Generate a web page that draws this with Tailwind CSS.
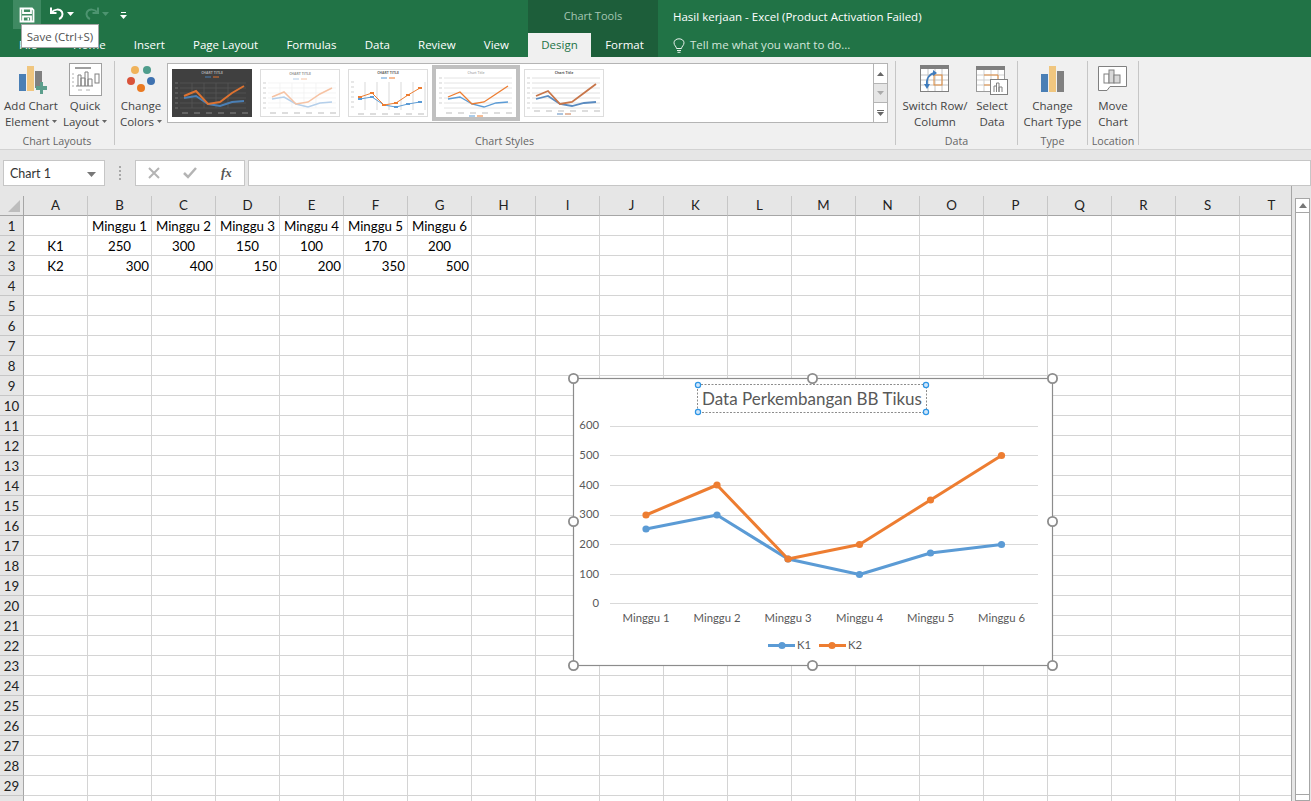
<!DOCTYPE html>
<html lang="en">

<head>
  <meta charset="UTF-8" />
  <title>Hasil kerjaan - Excel</title>
  <script src="https://cdn.jsdelivr.net/npm/@tailwindcss/browser@4"></script>
</head>

<body class="relative w-[1311px] h-[801px] overflow-hidden bg-[#e6e6e6] font-['Open_Sans',sans-serif]">
  <!-- Title bar and tabs -->
  <header class="flex h-[57px] bg-[#217346] text-white text-[11.5px]">
    <div class="w-[528px] flex flex-col">
      <div class="h-[33px] flex items-start pl-[13px]">
        <div class="w-7 h-[29px] bg-[#3f8a62] flex items-center justify-center">
          <svg width="16" height="16" viewBox="0 0 16 16" fill="none" stroke="#fff" stroke-width="1.800"><path d="M1.500 1.500H13L14.500 3V14.500H1.500Z" /><path d="M4 2V6H12V2" /><path d="M4 14V9.500H12V14" /><rect x="8.500" y="11" width="1.600" height="2.500" fill="#fff" stroke="none" /></svg>
        </div>
        <svg class="ml-2 mt-[5px]" width="16" height="16" viewBox="0 0 16 16" fill="none" stroke="#fff" stroke-width="2"><path d="M2 2.500V8H7.500" /><path d="M2.500 7.500C5 4 11 3.500 13 7C14.500 10 12.500 13 10 14" /></svg>
        <svg class="ml-[2px] mt-3" width="7" height="4" viewBox="0 0 7 4" fill="#fff"><path d="M0 0H7L3.500 4Z" /></svg>
        <svg class="ml-[10px] mt-[5px]" width="16" height="16" viewBox="0 0 16 16" fill="none" stroke="#4d9470" stroke-width="2"><path d="M14 2.500V8H8.500" /><path d="M13.500 7.500C11 4 5 3.500 3 7C1.500 10 3.500 13 6 14" /></svg>
        <svg class="ml-[2px] mt-3" width="7" height="4" viewBox="0 0 7 4" fill="#4d9470"><path d="M0 0H7L3.500 4Z" /></svg>
        <svg class="ml-[11px] mt-3" width="7" height="7" viewBox="0 0 7 7" fill="#fff"><rect x="1" y="0" width="5" height="1" /><path d="M0 3H7L3.500 7Z" /></svg>
      </div>
      <nav class="h-6 flex items-center">
        <span class="w-[59px] pl-[19px]">File</span>
        <span class="px-[14.1px]">Home</span>
        <span class="px-[14.1px]">Insert</span>
        <span class="px-[14.1px]">Page Layout</span>
        <span class="px-[14.1px]">Formulas</span>
        <span class="px-[14.1px]">Data</span>
        <span class="px-[14.1px]">Review</span>
        <span class="px-[14.1px]">View</span>
      </nav>
    </div>
    <div class="w-[130px] bg-[#1d5e3a] flex flex-col">
      <div class="h-[33px] flex items-center justify-center text-[#a5c6b3] text-[11px]">Chart Tools</div>
      <div class="h-6 flex">
        <span class="w-[63px] bg-[#f0f0f0] text-[#217346] flex items-center justify-center">Design</span>
        <span class="w-[67px] flex items-center justify-center">Format</span>
      </div>
    </div>
    <div class="flex-1 flex flex-col pl-[15px]">
      <div class="h-[33px] flex items-center">Hasil kerjaan - Excel (Product Activation Failed)</div>
      <div class="h-6 flex items-center text-[#d3e6da]">
        <svg width="12" height="15" viewBox="0 0 12 15" fill="none" stroke="#e8f2ec" stroke-width="1"><path d="M3.500 10.500C3.500 8.500 1 7.500 1 4.800C1 2.500 3.200 .8 6 .8C8.800 .8 11 2.500 11 4.800C11 7.500 8.500 8.500 8.500 10.500Z" /><path d="M4 12.500H8M4.500 14.300H7.500" /></svg>
        <span class="ml-[5px]">Tell me what you want to do...</span>
      </div>
    </div>
  </header>

  <!-- Tooltip on the save button -->
  <div class="absolute left-[21px] top-6 w-[78px] h-6 bg-white border border-[#a6a6a6] flex items-center justify-center text-[11.5px] pt-[2px] text-[#505050] whitespace-nowrap">Save (Ctrl+S)</div>

  <!-- Ribbon -->
  <section class="flex h-[93px] bg-[#f0f0f0] border-b border-[#d2d2d2] text-[11.500px] leading-4 text-[#444]">
    <!-- Chart Layouts -->
    <div class="w-[115px] mt-[4px] h-[84px] border-r border-[#c6c6c6] flex flex-col">
      <div class="flex-1 flex pt-[4px]">
        <div class="w-[62px] flex flex-col items-center">
          <svg width="32" height="33" viewBox="0 0 32 33"><rect x="4" y="9" width="7" height="17" fill="#4a7fb5" /><rect x="12" y="1" width="7" height="25" fill="#f0c67f" /><rect x="20" y="6" width="7" height="17" fill="#808080" /><path d="M21 21H25V17H28V21H32V25H28V29H25V25H21Z" fill="#5c9e8c" /></svg>
          <span class="text-center">Add Chart<br />Element <svg class="inline mb-[2px]" width="5" height="3" viewBox="0 0 5 3" fill="#666"><path d="M0 0H5L2.500 3Z" /></svg></span>
        </div>
        <div class="w-[46px] flex flex-col items-center">
          <svg class="-mt-[2px]" width="33" height="33" viewBox="0 0 33 33" fill="none"><rect x=".5" y=".5" width="32" height="32" fill="#fff" stroke="#a0a0a0" /><rect x="6" y="4" width="16" height="2" fill="#a0a0a0" /><path d="M9 23V12H12V23M12 23V15H16V23M16 23V9H19V23M19 23V16H23V23M7 23H24" stroke="#808080" /><rect x="26" y="11" width="4" height="9" stroke="#808080" /><path d="M3 11H5M3 15H5M3 19H5M3 23H5M9 27H13M17 27H21" stroke="#b0b0b0" /></svg>
          <span class="mt-[2px] text-center">Quick<br />Layout <svg class="inline mb-[2px]" width="5" height="3" viewBox="0 0 5 3" fill="#666"><path d="M0 0H5L2.500 3Z" /></svg></span>
        </div>
      </div>
      <div class="h-2 leading-2 text-center text-[10.700px] text-[#666]">Chart Layouts</div>
    </div>

    <!-- Chart Styles -->
    <div class="w-[781px] h-[84px] mt-[4px] border-r border-[#c6c6c6] flex flex-col">
      <div class="flex-1 flex">
        <div class="w-[52px] pt-[4px] flex flex-col items-center">
          <svg width="30" height="33" viewBox="0 0 30 33"><circle cx="9" cy="5" r="4" fill="#f0b35b" /><circle cx="21" cy="5" r="4" fill="#4f9d8c" /><circle cx="5" cy="16" r="4" fill="#d9533a" /><circle cx="25" cy="16" r="4" fill="#3f72b0" /><circle cx="15" cy="23" r="4" fill="#ea7a22" /></svg>
          <span class="text-center">Change<br />Colors <svg class="inline mb-[2px]" width="5" height="3" viewBox="0 0 5 3" fill="#666"><path d="M0 0H5L2.500 3Z" /></svg></span>
        </div>
        <div class="w-[721px] h-[60px] mt-[2px] bg-white border border-[#b4b4b4] flex">
          <div class="flex-1 flex items-center pl-1">
            <!-- dark style -->
            <svg width="80" height="48" viewBox="0 0 80 48"><rect width="80" height="48" fill="#404040" /><text x="40" y="5" text-anchor="middle" font-size="3.500" font-weight="700" fill="#aaa" font-family="Open Sans">CHART TITLE</text><path d="M33 8H39" stroke="#4a7fb5" /><path d="M41 8H47" stroke="#dd7230" /><path d="M8 14H74M8 19H74M8 24H74M8 29H74M8 34H74M8 39H74M20 14V39M32 14V39M44 14V39M56 14V39" stroke="#5c5c5c" stroke-width=".6" /><polyline points="12,29 24,27 36,35 48,37 60,33 72,32" fill="none" stroke="#4a7fb5" stroke-width="2" /><polyline points="12,27 24,22 36,35 48,33 60,24 72,17" fill="none" stroke="#dd7230" stroke-width="2" /><path d="M10 44H16M22 44H28M34 44H40M46 44H52M58 44H64M70 44H76" stroke="#888" /><path d="M3 14H6M3 19H6M3 24H6M3 29H6M3 34H6M3 39H6" stroke="#888" stroke-width=".7" /></svg>
            <!-- pale lines style -->
            <svg class="ml-2" width="80" height="48" viewBox="0 0 80 48"><rect x=".5" y=".5" width="79" height="47" fill="#fff" stroke="#ddd" /><text x="40" y="6" text-anchor="middle" font-size="3.500" font-weight="700" fill="#999" font-family="Open Sans">CHART TITLE</text><path d="M33 10H39" stroke="#b5cfea" /><path d="M41 10H47" stroke="#f6c3a4" /><path d="M8 14H76M8 19H76M8 24H76M8 29H76M8 34H76M8 39H76M20 14V39M32 14V39M44 14V39M56 14V39" stroke="#efefef" stroke-width=".7" /><polyline points="12,30 24,28 36,35 48,38 60,34 72,33" fill="none" stroke="#b5cfea" stroke-width="1.500" /><polyline points="12,28 24,23 36,35 48,33 60,25 72,19" fill="none" stroke="#f6c3a4" stroke-width="1.500" /><path d="M10 44H16M22 44H28M34 44H40M46 44H52M58 44H64M70 44H76" stroke="#bbb" /><path d="M3 14H6M3 19H6M3 24H6M3 29H6M3 34H6M3 39H6" stroke="#bbb" stroke-width=".7" /></svg>
            <!-- bands and markers style -->
            <svg class="ml-2" width="80" height="48" viewBox="0 0 80 48"><rect x=".5" y=".5" width="79" height="47" fill="#fff" stroke="#ddd" /><text x="40" y="5" text-anchor="middle" font-size="3.500" font-weight="700" fill="#666" font-family="Open Sans">CHART TITLE</text><path d="M33 9H39" stroke="#5b9bd5" /><path d="M41 9H47" stroke="#ed7d31" /><path d="M17 13V41M29 13V41M41 13V41M53 13V41M65 13V41M77 13V41" stroke="#e6e6e6" stroke-width="1.500" /><polyline points="12,30 24,28 36,36 48,38 60,35 72,33" fill="none" stroke="#5b9bd5" /><polyline points="12,28 24,24 36,36 48,34 60,26 72,19" fill="none" stroke="#ed7d31" /><path d="M10 30H14M22 28H26M34 36H38M46 38H50M58 35H62M70 33H74" stroke="#5b9bd5" stroke-width="2" /><path d="M10 28H14M22 24H26M34 36H38M46 34H50M58 26H62M70 19H74" stroke="#ed7d31" stroke-width="2" /><path d="M10 45H16M22 45H28M34 45H40M46 45H52M58 45H64M70 45H76" stroke="#bbb" /><path d="M3 13H6M3 18H6M3 23H6M3 28H6M3 33H6M3 38H6" stroke="#bbb" stroke-width=".7" /></svg>
            <!-- selected style -->
            <svg class="ml-1" width="88" height="56" viewBox="0 0 88 56"><rect width="88" height="56" fill="#c0c0c0" /><rect x="4" y="4" width="80" height="48" fill="#fff" /><text x="44" y="9" text-anchor="middle" font-size="3.500" fill="#888" font-family="Open Sans">Chart Title</text><path d="M12 13H80M12 18H80M12 23H80M12 28H80M12 33H80M12 38H80M12 43H80" stroke="#e4e4e4" /><polyline points="16,34 28,32 40,39 52,42 64,38 76,37" fill="none" stroke="#5b9bd5" stroke-width="1.300" /><polyline points="16,32 28,27 40,39 52,37 64,29 76,21" fill="none" stroke="#ed7d31" stroke-width="1.300" /><path d="M14 48H20M26 48H32M38 48H44M50 48H56M62 48H68M74 48H80" stroke="#bbb" /><path d="M37 51H43" stroke="#5b9bd5" /><path d="M45 51H51" stroke="#ed7d31" /><path d="M7 13H10M7 18H10M7 23H10M7 28H10M7 33H10M7 38H10" stroke="#bbb" stroke-width=".7" /></svg>
            <!-- thick lines style -->
            <svg class="ml-1" width="80" height="48" viewBox="0 0 80 48"><rect x=".5" y=".5" width="79" height="47" fill="#fff" stroke="#ddd" /><text x="40" y="5" text-anchor="middle" font-size="3.500" font-weight="700" fill="#555" font-family="Open Sans">Chart Title</text><path d="M8 9H76M8 14H76M8 19H76M8 24H76M8 29H76M8 34H76M8 39H76" stroke="#e0e0e0" /><polyline points="12,30 24,27 36,35 48,37 60,34 72,33" fill="none" stroke="#5a8bc0" stroke-width="1.800" /><polyline points="12,27 24,22 36,35 48,33 60,24 72,15" fill="none" stroke="#c8764a" stroke-width="1.800" /><path d="M10 42H16M22 42H28M34 42H40M46 42H52M58 42H64M70 42H76" stroke="#bbb" /><path d="M33 45H39" stroke="#5a8bc0" /><path d="M41 45H47" stroke="#c8764a" /><path d="M3 9H6M3 14H6M3 19H6M3 24H6M3 29H6M3 34H6M3 39H6" stroke="#bbb" stroke-width=".7" /></svg>
          </div>
          <div class="w-[14px] flex flex-col border-l border-[#b4b4b4]">
            <div class="h-[20px] flex items-center justify-center border-b border-[#b4b4b4]"><svg width="7" height="4" viewBox="0 0 7 4" fill="#666"><path d="M0 4H7L3.500 0Z" /></svg></div>
            <div class="h-[19px] bg-[#e6e6e6] flex items-center justify-center border-b border-[#b4b4b4]"><svg width="7" height="4" viewBox="0 0 7 4" fill="#aaa"><path d="M0 0H7L3.500 4Z" /></svg></div>
            <div class="flex-1 flex items-center justify-center"><svg width="7" height="6" viewBox="0 0 7 6" fill="#666"><rect width="7" height="1" /><path d="M0 2H7L3.500 6Z" /></svg></div>
          </div>
        </div>
      </div>
      <div class="h-2 leading-2 text-center text-[10.700px] text-[#666] pr-[1px]">Chart Styles</div>
    </div>

    <!-- Data -->
    <div class="w-[122px] h-[84px] mt-[4px] border-r border-[#c6c6c6] flex flex-col">
      <div class="flex-1 flex pl-[2px] pt-[4px]">
        <div class="w-[74px] flex flex-col items-center">
          <svg width="30" height="33" viewBox="0 0 30 33" fill="none"><rect x=".5" y=".5" width="28" height="26" fill="#fff" stroke="#808080" /><rect x="0" y="0" width="29" height="4" fill="#7f7f7f" /><path d="M1 10H28M1 15H28M1 20H28M8 4V26M15 4V26M22 4V26" stroke="#c4c4c4" /><rect x="14" y="10" width="8" height="10" stroke="#e08b3c" /><path d="M7 21C6 14 9 9 15 8" stroke="#3f7cbd" stroke-width="1.800" /><path d="M13 5L17 8L13 11ZM4 19L7 24L10 19Z" fill="#3f7cbd" /></svg>
          <span class="text-center">Switch Row/<br />Column</span>
        </div>
        <div class="w-[40px] flex flex-col items-center">
          <svg width="32" height="33" viewBox="0 0 32 33" fill="none"><rect x=".5" y="1.500" width="28" height="25" fill="#fff" stroke="#9a9a9a" /><rect x="0" y="1" width="29" height="4" fill="#7f7f7f" /><path d="M1 10H28M1 15H28M1 20H28M8 5V26M15 5V26M22 5V26" stroke="#cfcfcf" /><path d="M8 10H22V20H8" stroke="#e08b3c" /><rect x="14.500" y="14.500" width="17" height="15" fill="#fff" stroke="#808080" /><path d="M18 27V21H20.500V27M20.500 27V18H23V27M23 27V22H26V27" stroke="#808080" /></svg>
          <span class="text-center">Select<br />Data</span>
        </div>
      </div>
      <div class="h-2 leading-2 text-center text-[10.700px] text-[#666]">Data</div>
    </div>

    <!-- Type -->
    <div class="w-[70px] h-[84px] mt-[4px] border-r border-[#c6c6c6] flex flex-col">
      <div class="flex-1 flex flex-col items-center pt-[4px]">
        <svg width="24" height="33" viewBox="0 0 24 33"><rect x="0" y="9" width="7" height="18" fill="#4a7fb5" /><rect x="8" y="1" width="7" height="26" fill="#f0c67f" /><rect x="16" y="6" width="7" height="21" fill="#808080" /></svg>
        <span class="text-center whitespace-nowrap">Change<br />Chart Type</span>
      </div>
      <div class="h-2 leading-2 text-center text-[10.700px] text-[#666]">Type</div>
    </div>

    <!-- Location -->
    <div class="w-[51px] h-[84px] mt-[4px] border-r border-[#c6c6c6] flex flex-col">
      <div class="flex-1 flex flex-col items-center pt-[4px]">
        <svg width="30" height="33" viewBox="0 0 30 33" fill="none"><path d="M.5 1.500H28.500V21.500H12L9 25.500H.5Z" fill="#fff" stroke="#808080" /><rect x="6" y="9" width="5" height="9" stroke="#808080" /><rect x="11" y="5" width="5" height="13" fill="#d8d8d8" stroke="#808080" /><rect x="16" y="10" width="6" height="8" fill="#d8d8d8" stroke="#808080" /></svg>
        <span class="text-center">Move<br />Chart</span>
      </div>
      <div class="h-2 leading-2 text-center text-[10.700px] text-[#666] whitespace-nowrap">Location</div>
    </div>
  </section>

  <!-- Formula bar -->
  <section class="h-9 bg-[#e6e6e6] flex items-end pl-[3px]">
    <div class="w-[102px] h-[26px] bg-white border border-[#c6c6c6] flex items-center justify-between pl-[6px] pr-2 pt-[2px] text-[12.500px] text-[#333] font-['Lato',sans-serif]">
      Chart 1
      <svg width="9" height="5" viewBox="0 0 9 5" fill="#777"><path d="M0 0H9L4.500 5Z" /></svg>
    </div>
    <div class="w-[30px] h-[26px] flex flex-col items-center justify-center gap-[2px]">
      <i class="w-[2px] h-[2px] bg-[#a8a8a8]"></i><i class="w-[2px] h-[2px] bg-[#a8a8a8]"></i><i class="w-[2px] h-[2px] bg-[#a8a8a8]"></i><i class="w-[2px] h-[2px] bg-[#a8a8a8]"></i>
    </div>
    <div class="w-[110px] h-[26px] bg-white border border-[#c6c6c6] flex items-center pl-[12px]">
      <svg width="12" height="12" viewBox="0 0 12 12" stroke="#b4b4b4" stroke-width="2"><path d="M1 1L11 11M11 1L1 11" /></svg>
      <svg class="ml-[23px]" width="14" height="12" viewBox="0 0 14 12" fill="none" stroke="#b4b4b4" stroke-width="2.500"><path d="M1 6L5 10L13 1" /></svg>
      <span class="ml-[24px] font-['Liberation_Serif',serif] italic font-bold text-[13px] text-[#555]">fx</span>
    </div>
    <div class="w-[1063px] ml-[3px] h-[26px] bg-white border border-[#c6c6c6]"></div>
  </section>

  <!-- Worksheet and vertical scrollbar -->
  <section class="flex h-[615px]">
    <div class="relative w-[1292px] h-full overflow-hidden bg-white border-r border-[#a6a6a6]">
      <div class="h-[10px] bg-[#e6e6e6]"></div>
      <div id="sheet" class="grid grid-cols-[24px_repeat(20,64px)] auto-rows-[20px] w-max font-['Lato',sans-serif] text-[13.300px] text-black"></div>
      <svg class="absolute left-[8px] top-[14px]" width="12" height="12" viewBox="0 0 12 12" fill="#bdbdbd"><path d="M12 0V12H0Z" /></svg>
    </div>
    <div class="w-[19px] pl-[3px] pt-3 pr-[1px]">
      <div class="h-full bg-white border border-[#a6a6a6] flex flex-col justify-between">
        <div class="h-[14px] flex items-center justify-center border-b border-[#a6a6a6]"><svg width="8" height="5" viewBox="0 0 8 5" fill="#777"><path d="M0 5H8L4 0Z" /></svg></div>
        <div class="h-[6px] border-t border-[#a6a6a6]"></div>
      </div>
    </div>
  </section>

  <!-- Chart floating over the sheet -->
  <svg class="absolute left-[560px] top-[370px] font-['Lato',sans-serif]" width="510" height="310" viewBox="560 370 510 310">
    <rect x="573.500" y="378.500" width="479" height="287" fill="#fff" stroke="#8c8c8c" stroke-width="1.200" />
    <g stroke="#d9d9d9">
      <path d="M610 426.500H1038M610 455.500H1038M610 485.500H1038M610 515.500H1038M610 544.500H1038M610 574.500H1038M610 603.500H1038" />
    </g>
    <g fill="#595959" font-size="11.300" text-anchor="end">
      <text x="599" y="429">600</text><text x="599" y="459">500</text><text x="599" y="489">400</text><text x="599" y="518">300</text><text x="599" y="548">200</text><text x="599" y="578">100</text><text x="599" y="607">0</text>
    </g>
    <g fill="#595959" font-size="11.300" text-anchor="middle">
      <text x="646" y="622">Minggu 1</text><text x="717" y="622">Minggu 2</text><text x="788" y="622">Minggu 3</text><text x="859.500" y="622">Minggu 4</text><text x="930.500" y="622">Minggu 5</text><text x="1001.500" y="622">Minggu 6</text>
    </g>
    <polyline points="646,529 717,515 788,559 859.500,574.500 930.500,553 1001.500,544.500" fill="none" stroke="#5b9bd5" stroke-width="3" stroke-linejoin="round" />
    <g fill="#5b9bd5"><circle cx="646" cy="529" r="3.600" /><circle cx="717" cy="515" r="3.600" /><circle cx="788" cy="559" r="3.600" /><circle cx="859.500" cy="574.500" r="3.600" /><circle cx="930.500" cy="553" r="3.600" /><circle cx="1001.500" cy="544.500" r="3.600" /></g>
    <polyline points="646,515 717,485 788,559 859.500,544.500 930.500,500 1001.500,455.500" fill="none" stroke="#ed7d31" stroke-width="3" stroke-linejoin="round" />
    <g fill="#ed7d31"><circle cx="646" cy="515" r="3.600" /><circle cx="717" cy="485" r="3.600" /><circle cx="788" cy="559" r="3.600" /><circle cx="859.500" cy="544.500" r="3.600" /><circle cx="930.500" cy="500" r="3.600" /><circle cx="1001.500" cy="455.500" r="3.600" /></g>
    <!-- legend -->
    <path d="M768 645.500H795" stroke="#5b9bd5" stroke-width="3" /><circle cx="782" cy="645.500" r="3.600" fill="#5b9bd5" />
    <text x="797" y="649" fill="#595959" font-size="11.300">K1</text>
    <path d="M819 645.500H846" stroke="#ed7d31" stroke-width="3" /><circle cx="832" cy="645.500" r="3.600" fill="#ed7d31" />
    <text x="848" y="649" fill="#595959" font-size="11.300">K2</text>
    <!-- title with selection box -->
    <rect x="697.500" y="384.500" width="229" height="28" fill="none" stroke="#8c8c8c" stroke-dasharray="2 1.500" />
    <text x="812" y="405" fill="#595959" font-size="17" text-anchor="middle">Data Perkembangan BB Tikus</text>
    <g fill="#cfe6fb" stroke="#2d95e5" stroke-width="1.200">
      <circle cx="698" cy="385" r="2.600" /><circle cx="926" cy="385" r="2.600" /><circle cx="698" cy="412" r="2.600" /><circle cx="926" cy="412" r="2.600" />
    </g>
    <!-- chart handles -->
    <g fill="#fff" stroke="#8c8c8c" stroke-width="1.800">
      <circle cx="573.500" cy="378.500" r="4.600" /><circle cx="812.500" cy="378.500" r="4.600" /><circle cx="1052.500" cy="378.500" r="4.600" /><circle cx="573.500" cy="521.500" r="4.600" /><circle cx="1052.500" cy="521.500" r="4.600" /><circle cx="573.500" cy="665.500" r="4.600" /><circle cx="812.500" cy="665.500" r="4.600" /><circle cx="1052.500" cy="665.500" r="4.600" />
    </g>
  </svg>

  <script>
    const columns = 'ABCDEFGHIJKLMNOPQRST'.split('');
    const cells = {
      B1: 'Minggu 1', C1: 'Minggu 2', D1: 'Minggu 3', E1: 'Minggu 4', F1: 'Minggu 5', G1: 'Minggu 6',
      A2: 'K1', B2: '250', C2: '300', D2: '150', E2: '100', F2: '170', G2: '200',
      A3: 'K2', B3: '300', C3: '400', D3: '150', E3: '200', F3: '350', G3: '500'
    };

    let html = '<div class="bg-[#e6e6e6] border-r border-b border-[#a6a6a6]"></div>';
    columns.forEach((col) => {
      html += `<div class="bg-[#e6e6e6] border-r border-b border-r-[#c6c6c6] border-b-[#a6a6a6] flex items-center justify-center text-[#222]">${col}</div>`;
    });

    for (let row = 1; row <= 30; row++) {
      // row 30 only shows its top few pixels, below the number
      html += `<div class="bg-[#e6e6e6] border-r border-b border-r-[#a6a6a6] border-b-[#c6c6c6] flex items-center justify-center pt-[2px] text-[#222]">${row < 30 ? row : ''}</div>`;
      columns.forEach((col) => {
        const text = cells[col + row] || '';
        // row 3 holds numbers aligned right, like the sheet does
        const align = row === 3 && col !== 'A' ? 'justify-end pr-[2px]' : 'justify-center';
        html += `<div class="border-r border-b border-[#d4d4d4] flex items-center pt-[2px] whitespace-nowrap ${align}">${text}</div>`;
      });
    }
    document.getElementById('sheet').innerHTML = html;
  </script>
</body>

</html>
